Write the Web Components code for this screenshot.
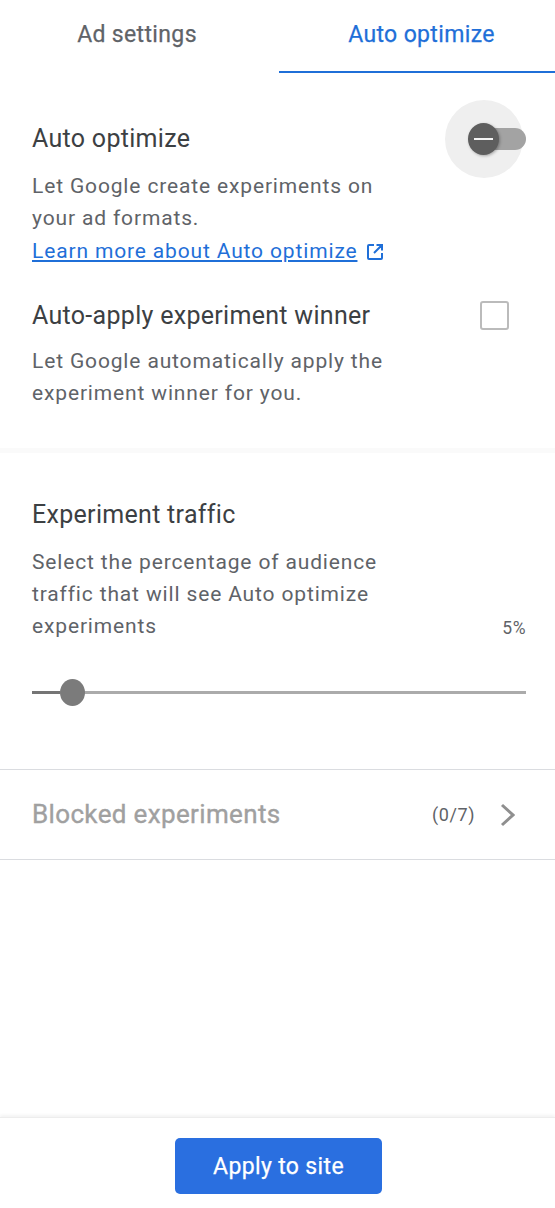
<!DOCTYPE html>
<html>
<head>
<meta charset="utf-8">
<title>Auto optimize</title>
<style>
  html, body { margin: 0; background: #fff; }
  body { font-family: Roboto, "Liberation Sans", sans-serif; }
</style>
</head>
<body>
<template id="tab-bar-tpl">
  <style>
    :host { display: flex; height: 73px; background: #fff; }
    .tab { display: flex; justify-content: center; box-sizing: border-box;
      font-size: 23px; line-height: 30px; font-weight: 400; letter-spacing: .35px; color: #5f6368; -webkit-text-stroke: .25px; }
    .tab.off { flex: 0 0 279px; padding: 20px 5px 0 0; }
    .tab.on { flex: 1; padding: 20px 0 0 9px; color: #1f6fd8; border-bottom: 2px solid #1f6fd8; }
  </style>
  <div class="tab off">Ad settings</div>
  <div class="tab on">Auto optimize</div>
</template>

<template id="setting-row-tpl">
  <style>
    :host { display: flex; justify-content: space-between; padding: 0 29px 0 32px; }
    .text { width: 370px; }
    .title { font-size: 25px; line-height: 32px; color: #3c4043; letter-spacing: .3px; white-space: nowrap; }
    .desc { margin-top: var(--desc-gap, 15px); font-size: 21px; line-height: 32px; color: #5f6368; letter-spacing: .85px; }
  </style>
  <div class="text">
    <div class="title"><slot name="title"></slot></div>
    <div class="desc"><slot></slot></div>
  </div>
  <slot name="control"></slot>
</template>

<template id="toggle-tpl">
  <style>
    :host { display: block; position: relative; width: 58px; height: 32px; }
    .track { position: absolute; left: 16px; top: 5px; width: 42px; height: 22px; border-radius: 11px; background: #a3a3a3; }
    .halo { position: absolute; left: -23px; top: -23px; width: 78px; height: 78px; border-radius: 50%; background: #efefef; }
    .thumb { position: absolute; left: 0; top: 0; width: 31px; height: 32px; border-radius: 50%; background: #5e5e5e;
      box-shadow: 1px 1px 3px rgba(0,0,0,.3); display: flex; align-items: center; justify-content: center; }
    .thumb i { display: block; width: 19px; height: 2.5px; background: #f4f4f4; }
  </style>
  <div class="halo"></div>
  <div class="track"></div>
  <div class="thumb"><i></i></div>
</template>

<template id="check-box-tpl">
  <style>
    :host { display: block; width: 25px; height: 25px; border: 2px solid #bbb; border-radius: 3px; margin: 1px 17px 0 0; }
  </style>
</template>

<template id="range-slider-tpl">
  <style>
    :host { display: block; position: relative; height: 3px; margin: 0 29px 0 32px; background: #ababab; }
    .fill { width: 28px; height: 3px; background: #757575; }
    .thumb { position: absolute; left: 28px; top: -12px; width: 25px; height: 27px; border-radius: 50%; background: #7b7b7b; }
  </style>
  <div class="fill"></div>
  <div class="thumb"></div>
</template>

<template id="nav-row-tpl">
  <style>
    :host { display: flex; align-items: center; height: 91px; box-sizing: border-box; padding: 0 40px 0 32px;
      border-top: 1px solid #dadce0; border-bottom: 1px solid #dadce0; }
    .label { flex: 1; font-size: 26px; line-height: 30px; margin-top: -2px; font-weight: 400; color: #a0a0a0; letter-spacing: .35px; -webkit-text-stroke: .35px; }
    .count { font-size: 18px; color: #5f6368; letter-spacing: .6px; margin-right: 25px; }
    svg { display: block; }
  </style>
  <div class="label"><slot></slot></div>
  <div class="count"><slot name="count"></slot></div>
  <svg width="15" height="24" viewBox="0 0 15 24" fill="none" stroke="#8f8f8f" stroke-width="3"><path d="M2 2l11 10L2 22"/></svg>
</template>

<template id="bottom-bar-tpl">
  <style>
    :host { display: flex; justify-content: center; padding: 20px 0 14px 2px; border-top: 1px solid #ededed;
      box-shadow: 0 -2px 3px rgba(0,0,0,.05); background: #fff; }
    button { width: 207px; height: 56px; border: 0; border-radius: 5px; background: #2a6fe0; color: #fff;
      font: 400 23px Roboto, "Liberation Sans", sans-serif; letter-spacing: .35px; padding: 0; -webkit-text-stroke: .25px; }
  </style>
  <button><slot></slot></button>
</template>

<template id="settings-page-tpl">
  <style>
    :host { display: flex; flex-direction: column; height: 1208px; overflow: hidden; background: #fff; }
    .top { padding-top: 50px; display: flex; flex-direction: column; gap: 33px; height: 375px; box-sizing: border-box; }
    .rule { height: 5px; background: #fafafa; flex: none; }
    .traffic { padding-top: 46px; height: 316px; box-sizing: border-box; }
    .pct { display: flex; justify-content: flex-end; padding-right: 29px; margin-top: -24px; height: 73px; box-sizing: border-box;
      font-size: 17.5px; line-height: 20px; color: #5f6368; letter-spacing: .5px; }
    .spacer { flex: 1; }
    a { color: #1f6fd8; display: inline-block; margin-top: 1px; }
    .ext { vertical-align: -3px; margin-left: 9px; }
  </style>
  <tab-bar></tab-bar>
  <div class="top">
    <setting-row>
      <span slot="title">Auto optimize</span>
      Let Google create experiments on your ad formats.<br>
      <a href="#">Learn more about Auto optimize</a><svg class="ext" width="18" height="18" viewBox="0 0 18 18" fill="none" stroke="#1f6fd8" stroke-width="2"><path d="M8 2H3a1 1 0 0 0-1 1v12a1 1 0 0 0 1 1h12a1 1 0 0 0 1-1v-5M10.500 2H16v5.500M16 2L8 10"/></svg>
      <toggle-switch slot="control"></toggle-switch>
    </setting-row>
    <setting-row style="--desc-gap:13px">
      <span slot="title">Auto-apply experiment winner</span>
      Let Google automatically apply the experiment winner for you.
      <check-box slot="control"></check-box>
    </setting-row>
  </div>
  <div class="rule"></div>
  <div class="traffic">
    <setting-row>
      <span slot="title">Experiment traffic</span>
      Select the percentage of audience traffic that will see Auto optimize experiments
    </setting-row>
    <div class="pct">5%</div>
    <range-slider></range-slider>
  </div>
  <nav-row>Blocked experiments<span slot="count">(0/7)</span></nav-row>
  <div class="spacer"></div>
  <bottom-bar>Apply to site</bottom-bar>
</template>

<script>
  // every element just clones its template into an open shadow root
  const parts = {
    "tab-bar": "tab-bar-tpl",
    "setting-row": "setting-row-tpl",
    "toggle-switch": "toggle-tpl",
    "check-box": "check-box-tpl",
    "range-slider": "range-slider-tpl",
    "nav-row": "nav-row-tpl",
    "bottom-bar": "bottom-bar-tpl",
    "settings-page": "settings-page-tpl"
  };
  Object.keys(parts).forEach(name => {
    customElements.define(name, class extends HTMLElement {
      constructor() {
        super();
        this.attachShadow({mode: "open"});
        this.shadowRoot.appendChild(document.getElementById(parts[name]).content.cloneNode(true));
      }
    });
  });
</script>
<settings-page></settings-page>
</body>
</html>
